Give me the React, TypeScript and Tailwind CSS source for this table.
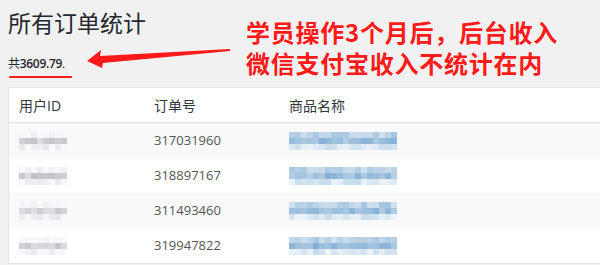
import React from "react";

function rand(seed: number) {
  let s = seed;
  return () => {
    s = (s * 9301 + 49297) % 233280;
    return s / 233280;
  };
}

function Pixels({ seed, cols, tone }: { seed: number; cols: number; tone: "gray" | "blue" }) {
  const r = rand(seed);
  const rows = [0, 1, 2];
  return (
    <div className="flex flex-col">
      {rows.map((row) => (
        <div key={row} className="flex">
          {Array.from({ length: cols }).map((_, c) => {
            const v = r();
            let color: string;
            if (tone === "gray") {
              const base = row === 1 ? 200 : row === 0 ? 238 : 232;
              const g = Math.round(base + v * 30 - (row === 1 ? 5 : 0));
              const gg = Math.min(g, 250);
              color = `rgb(${gg - 2},${gg - 2},${gg + 2})`;
            } else {
              const t = row === 1 ? 0.55 + v * 0.35 : row === 0 ? 0.3 + v * 0.35 : 0.1 + v * 0.3;
              const rr = Math.round(250 - t * 130);
              const gg = Math.round(252 - t * 85);
              const bb = Math.round(253 - t * 45);
              color = `rgb(${rr},${gg},${bb})`;
            }
            return <div key={c} className="w-[6px] h-[6px]" style={{ backgroundColor: color }} />;
          })}
        </div>
      ))}
    </div>
  );
}

const rows = [
  { id: 1, order: "317031960" },
  { id: 2, order: "318897167" },
  { id: 3, order: "311493460" },
  { id: 4, order: "319947822" },
];

export default function App() {
  return (
    <div
      className="relative w-[600px] h-[265px] overflow-hidden bg-[#f1f1f1] text-[#32373c]"
      style={{ fontFamily: '"Open Sans", "Noto Sans CJK SC", sans-serif' }}
    >
      <div className="pl-[8px] pt-[8px]">
        <h1 className="text-[23px] leading-[30px] font-normal text-[#23282d]">所有订单统计</h1>
        <div className="mt-[17px] text-[12px] leading-[17px] text-[#23282d] relative w-fit tracking-[-0.3px]">
          共<b className="font-semibold">3609.79</b>.
        </div>
      </div>

      <div className="absolute left-[9px] top-[76px] w-[63px] h-[2px] bg-[#ff1a1a] rounded-full" />
      <svg className="absolute left-0 top-0" width="600" height="100">
        <polygon points="87,61 101,50 100,56 230,49 230,51 103,63 102,68" fill="#ff1a1a" />
      </svg>

      <div
        className="absolute left-[246px] top-[16px] text-[24px] font-bold text-[#ff1a1a] tracking-[0.75px] flex flex-col"
        style={{ fontFamily: '"Noto Sans CJK SC", sans-serif' }}
      >
        <div className="h-[31px] leading-[31px]">学员操作3个月后，后台收入</div>
        <div className="h-[31px] leading-[31px]">微信支付宝收入不统计在内</div>
      </div>

      <div className="absolute left-[8px] top-[87px] right-0 bg-white border border-[#e5e5e5] border-r-0">
        <div className="flex h-[35px] items-center border-b border-[#e1e1e1] text-[14px]">
          <div className="w-[135px] pl-[10px]">用户ID</div>
          <div className="w-[135px] pl-[10px]">订单号</div>
          <div className="pl-[10px]">商品名称</div>
        </div>
        {rows.map((row, i) => (
          <div
            key={row.id}
            className={`flex h-[35px] items-center text-[13px] text-[#555] ${i % 2 === 0 ? "bg-[#f9f9f9]" : "bg-white"}`}
          >
            <div className="w-[135px] pl-[10px]">
              <Pixels seed={row.id * 17} cols={8} tone="gray" />
            </div>
            <div className="w-[135px] pl-[10px]">{row.order}</div>
            <div className="pl-[10px]">
              <Pixels seed={row.id * 31 + 5} cols={18} tone="blue" />
            </div>
          </div>
        ))}
      </div>
    </div>
  );
}
